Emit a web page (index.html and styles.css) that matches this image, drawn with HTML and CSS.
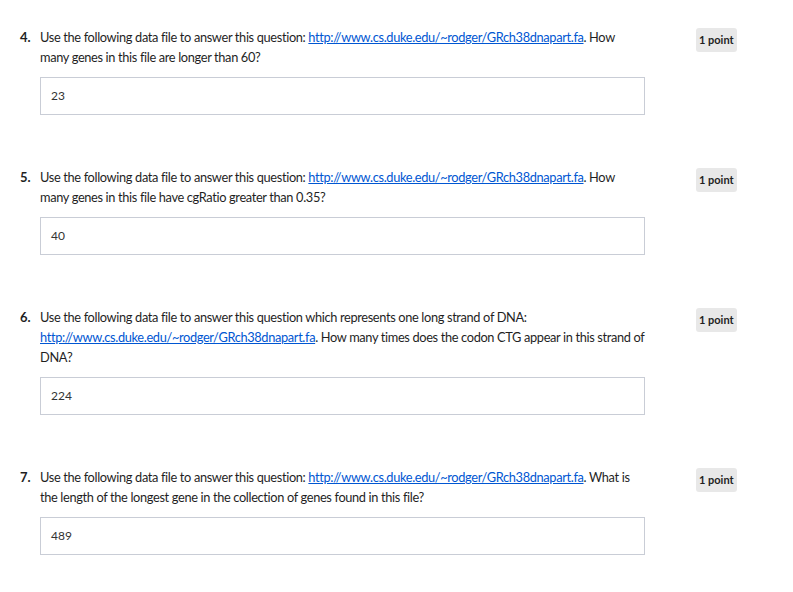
FILE: index.html
```html
<!DOCTYPE html>
<html>
<head>
<meta charset="utf-8">
<link rel="stylesheet" href="styles.css">
</head>
<body>
<div class="quiz">
  <div class="question">
    <div class="num">4.</div>
    <div class="content">
      <p class="prompt">Use the following data file to answer this question: <a href="#">http://www.cs.duke.edu/~rodger/GRch38dnapart.fa</a>. How many genes in this file are longer than 60?</p>
      <div class="answer">23</div>
    </div>
    <div class="points"><span class="badge">1 point</span></div>
  </div>
  <div class="question">
    <div class="num">5.</div>
    <div class="content">
      <p class="prompt">Use the following data file to answer this question: <a href="#">http://www.cs.duke.edu/~rodger/GRch38dnapart.fa</a>. How many genes in this file have cgRatio greater than 0.35?</p>
      <div class="answer">40</div>
    </div>
    <div class="points"><span class="badge">1 point</span></div>
  </div>
  <div class="question">
    <div class="num">6.</div>
    <div class="content">
      <p class="prompt">Use the following data file to answer this question which represents one long strand of DNA: <a href="#">http://www.cs.duke.edu/~rodger/GRch38dnapart.fa</a>. How many times does the codon CTG appear in this strand of DNA?</p>
      <div class="answer">224</div>
    </div>
    <div class="points"><span class="badge">1 point</span></div>
  </div>
  <div class="question">
    <div class="num">7.</div>
    <div class="content">
      <p class="prompt">Use the following data file to answer this question: <a href="#">http://www.cs.duke.edu/~rodger/GRch38dnapart.fa</a>. What is the length of the longest gene in the collection of genes found in this file?</p>
      <div class="answer">489</div>
    </div>
    <div class="points"><span class="badge">1 point</span></div>
  </div>
</div>
</body>
</html>
```

FILE: styles.css
```css
html, body {
  margin: 0;
  padding: 0;
  background: #ffffff;
}
body {
  font-family: Lato, "Liberation Sans", sans-serif;
  color: #1f1f1f;
}
.quiz {
  padding: 27px 0 0 20px;
  display: flex;
  flex-direction: column;
  gap: 52px;
}
.question {
  display: flex;
  align-items: flex-start;
}
.num {
  width: 20px;
  font-weight: bold;
  font-size: 13px;
  line-height: 20px;
}
.content {
  width: 605px;
}
.prompt {
  margin: 0;
  font-size: 12.8px;
  letter-spacing: -0.35px;
  line-height: 20px;
}
.prompt a {
  color: #0056d2;
  text-decoration: underline;
}
.answer {
  margin-top: 10px;
  height: 36px;
  border: 1px solid #c9cdd6;
  padding: 0 10px;
  font-size: 12px;
  line-height: 36px;
  color: #333333;
}
.points {
  margin-left: 51px;
  padding-top: 1px;
}
.badge {
  display: inline-block;
  background: #e8e8e8;
  border-radius: 3px;
  font-size: 11px;
  font-weight: bold;
  line-height: 24px;
  padding: 0 3px;
  color: #1f1f1f;
}
```
